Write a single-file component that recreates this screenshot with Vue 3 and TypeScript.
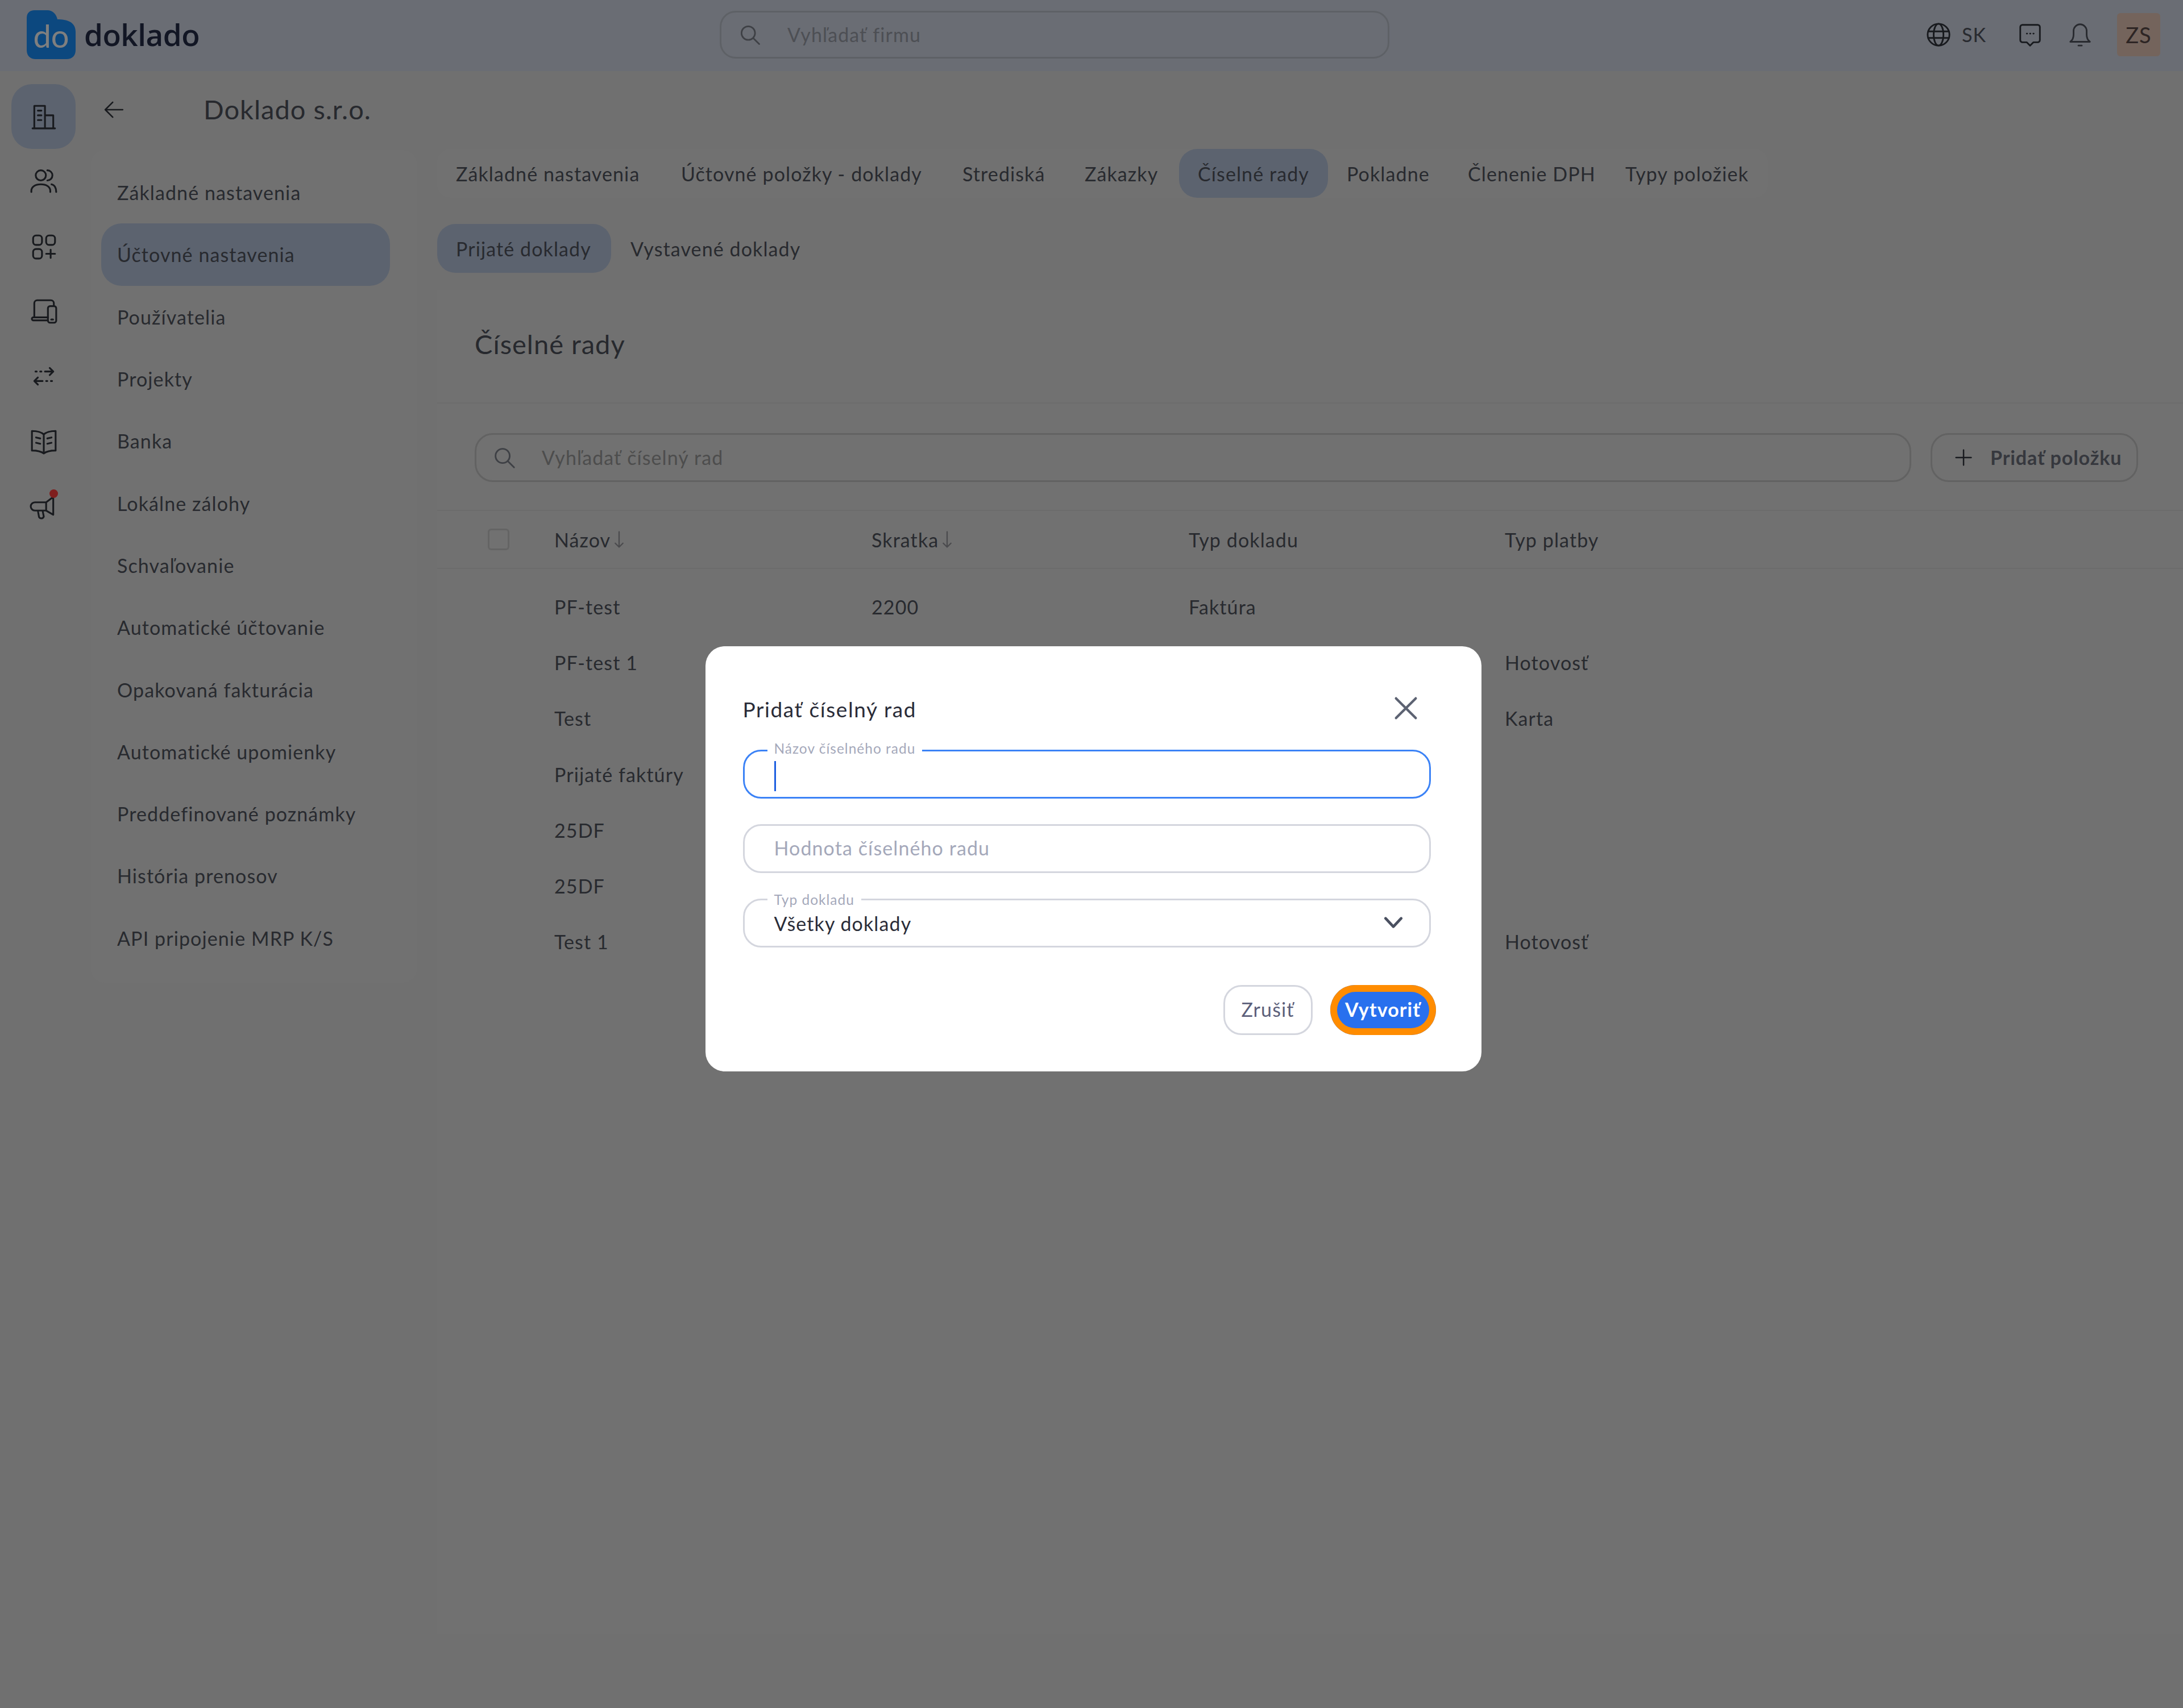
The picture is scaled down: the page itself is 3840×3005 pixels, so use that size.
<script setup lang="ts">
const railIcons = ['building', 'users', 'apps', 'devices', 'swap', 'book', 'megaphone']
const menu = ['Základné nastavenia', 'Účtovné nastavenia', 'Používatelia', 'Projekty', 'Banka', 'Lokálne zálohy', 'Schvaľovanie', 'Automatické účtovanie', 'Opakovaná fakturácia', 'Automatické upomienky', 'Preddefinované poznámky', 'História prenosov', 'API pripojenie MRP K/S']
const tabs = ['Základné nastavenia', 'Účtovné položky - doklady', 'Strediská', 'Zákazky', 'Číselné rady', 'Pokladne', 'Členenie DPH', 'Typy položiek']
const rows = [
  ['PF-test', '2200', 'Faktúra', ''],
  ['PF-test 1', '', '', 'Hotovosť'],
  ['Test', '', '', 'Karta'],
  ['Prijaté faktúry', '', '', ''],
  ['25DF', '', '', ''],
  ['25DF', '', '', ''],
  ['Test 1', '', '', 'Hotovosť'],
]
</script>

<template>
  <div class="page">
    <header class="topbar">
      <div class="logo">
        <div class="logo-mark">
          <svg viewBox="0 0 86 86" width="86" height="86"><path d="M14 0H36C46 0 52 7 54 16C70 16 86 20 86 38V70C86 80 80 86 70 86H16C6 86 0 80 0 70V14C0 5 5 0 14 0Z" fill="#1890ff"/></svg>
          <span class="logo-do">do</span>
        </div>
        <span class="logo-word">doklado</span>
      </div>
      <div class="top-search">
        <svg class="ic" viewBox="0 0 24 24" width="44" height="44"><circle cx="10.5" cy="10.5" r="6.5"/><path d="M15.5 15.5L21 21"/></svg>
        <span>Vyhľadať firmu</span>
      </div>
      <div class="top-right">
        <svg class="ic dark" viewBox="0 0 24 24" width="46" height="46"><circle cx="12" cy="12" r="10"/><ellipse cx="12" cy="12" rx="4.5" ry="10"/><path d="M2.5 9H21.5M2.5 15H21.5"/></svg>
        <span class="lang">SK</span>
        <svg class="ic dark chat" viewBox="0 0 24 24" width="46" height="46"><path d="M5 3H19A2 2 0 0 1 21 5V17A2 2 0 0 1 19 19H15L12 22L9 19H5A2 2 0 0 1 3 17V5A2 2 0 0 1 5 3Z"/><path d="M9 11H9.3M12 11H12.3M15 11H15.3"/></svg>
        <svg class="ic bell" viewBox="0 0 24 24" width="46" height="46"><path d="M3 18.5C5 17 6 15 6 12V8.5A6 6 0 0 1 18 8.5V12C18 15 19 17 21 18.5Z"/><path d="M10.5 22H13.5"/></svg>
        <div class="avatar">ZS</div>
      </div>
    </header>

    <div class="body">
      <nav class="rail">
        <div v-for="(n, i) in railIcons" :key="n" class="rail-slot" :class="{ on: i === 0 }">
          <svg class="ic dark" viewBox="0 0 24 24" width="50" height="50">
            <template v-if="n === 'building'"><path d="M4 22V3H13V22M13 11H20V22M2.5 22H21.5M7 7H10M7 11H10M7 15H10" /></template>
            <template v-else-if="n === 'users'"><circle cx="9.5" cy="7" r="4.3"/><path d="M15 2.7A4.3 4.3 0 0 1 15 11.300M1.500 21V20C1.500 16.500 5 14.500 9.500 14.500S17.500 16.500 17.500 20V21M18.500 14.500C21 15 22.500 17.500 22.500 21"/></template>
            <template v-else-if="n === 'apps'"><rect x="3" y="2.500" width="7.500" height="8" rx="2.500"/><rect x="14" y="2.500" width="7.500" height="8" rx="2.500"/><rect x="3" y="14" width="7.500" height="8" rx="2.500"/><path d="M14 18H21.500M17.800 14.500V21.500"/></template>
            <template v-else-if="n === 'devices'"><path d="M4 17V5A2.500 2.500 0 0 1 6.500 2.500H18A2.500 2.500 0 0 1 20.500 5V7M15.500 19.500H3.200A1.200 1.200 0 0 1 3.200 17H15.500"/><rect x="15.500" y="7.500" width="7" height="14" rx="1.800"/><path d="M18.300 18.800H19.800"/></template>
            <template v-else-if="n === 'swap'"><path d="M13 8H20M17 5L20 8L17 11M11 16H4M7 13L4 16L7 19M5 8H6M9 8H10M14 16H15M18 16H19"/></template>
            <template v-else-if="n === 'book'"><path d="M12 6C9.500 3.500 6 3 2 3V19.500C6 19.500 9.500 20 12 22C14.500 20 18 19.500 22 19.500V3C18 3 14.500 3.500 12 6ZM12 6V22M5.500 8.500L9 9.300M5.500 13L9 13.800M15 9.300L18.500 8.500M15 13.800L18.500 13"/></template>
            <template v-else><path d="M4.500 8.500H14L20 4V19L14 15.500H4.500A3.500 3.500 0 0 1 4.500 8.500ZM14 8.500V15.500M7 15.500L8 21A2.200 2.200 0 0 0 12 20.500L11 15.500"/></template>
          </svg>
          <i v-if="n === 'megaphone'" class="dot"></i>
        </div>
      </nav>

      <aside class="side">
        <div class="side-head">
          <svg class="ic dark back" viewBox="0 0 24 24" width="42" height="42"><path d="M21 12H3.500M11 4.500L3.500 12L11 19.500"/></svg>
          <h1>Doklado s.r.o.</h1>
        </div>
        <ul class="menu">
          <li v-for="(m, i) in menu" :key="m" :class="{ on: i === 1 }">{{ m }}</li>
        </ul>
      </aside>

      <main class="main">
        <div class="tabs top">
          <div v-for="(t, i) in tabs" :key="t" class="tab" :class="{ on: i === 4 }">{{ t }}</div>
        </div>
        <div class="tabs sub">
          <div class="tab on">Prijaté doklady</div>
          <div class="tab">Vystavené doklady</div>
        </div>
        <section class="panel">
          <h2>Číselné rady</h2>
          <div class="tools">
            <div class="search">
              <svg class="ic" viewBox="0 0 24 24" width="46" height="46"><circle cx="10.500" cy="10.500" r="6.500"/><path d="M15.500 15.500L21 21"/></svg>
              <span>Vyhľadať číselný rad</span>
            </div>
            <div class="add">
              <svg class="ic dark" viewBox="0 0 24 24" width="40" height="40"><path d="M12 4V20M4 12H20"/></svg>
              <span>Pridať položku</span>
            </div>
          </div>
          <div class="thead">
            <div class="check"></div>
            <div class="cell">Názov<svg class="ic arr" viewBox="0 0 12 24" width="18" height="36"><path d="M6 3V21M1.500 16.500L6 21L10.500 16.500"/></svg></div>
            <div class="cell">Skratka<svg class="ic arr" viewBox="0 0 12 24" width="18" height="36"><path d="M6 3V21M1.500 16.500L6 21L10.500 16.500"/></svg></div>
            <div class="cell">Typ dokladu</div>
            <div class="cell">Typ platby</div>
          </div>
          <div class="tbody">
            <div v-for="(r, i) in rows" :key="i" class="row">
              <div class="cell" v-for="(c, j) in r" :key="j">{{ c }}</div>
            </div>
          </div>
        </section>
      </main>
    </div>

    <div class="overlay">
      <div class="modal">
        <div class="modal-head">
          <h3>Pridať číselný rad</h3>
          <svg class="close" viewBox="0 0 24 24" width="52" height="52"><path d="M4 4L20 20M20 4L4 20"/></svg>
        </div>
        <div class="field focus">
          <label>Názov číselného radu</label>
          <i class="caret"></i>
        </div>
        <div class="field">
          <span class="ph">Hodnota číselného radu</span>
        </div>
        <div class="field">
          <label>Typ dokladu</label>
          <span class="val">Všetky doklady</span>
          <svg class="chev" viewBox="0 0 24 24" width="44" height="44"><path d="M4.500 8L12 16L19.500 8"/></svg>
        </div>
        <div class="actions">
          <button class="btn ghost">Zrušiť</button>
          <button class="btn primary">Vytvoriť</button>
        </div>
      </div>
    </div>
  </div>
</template>

<style scoped>
.page {
  position: relative;
  width: 3840px;
  height: 3005px;
  overflow: hidden;
  background: #e0e0e0;
  color: #50545e;
  font-family: "Lato", "Liberation Sans", sans-serif;
  font-size: 34px;
  letter-spacing: 1.1px;
}
h1, h2, h3, ul { margin: 0; padding: 0; font-weight: 400; }
.ic { fill: none; stroke: #7c808a; stroke-width: 1.5; stroke-linecap: round; stroke-linejoin: round; flex: none; }
.ic.dark { stroke: #30343c; }

.topbar {
  height: 125px;
  background: #d4dae8;
  display: flex;
  align-items: center;
  position: relative;
  padding: 0 40px 4px 47px;
  box-sizing: border-box;
}
.logo { display: flex; align-items: center; width: 1219px; }
.logo-mark { position: relative; width: 86px; height: 86px; display: flex; align-items: center; justify-content: center; }
.logo-mark svg { position: absolute; inset: 0; }
.logo-do { position: relative; color: #ffffff; font-size: 56px; font-weight: 400; letter-spacing: 0; padding-top: 4px; }
.logo-word { margin-left: 15px; color: #242c48; font-size: 53px; font-weight: 600; letter-spacing: -0.5px; font-family: "Open Sans", sans-serif; }
.top-search {
  width: 1178px;
  height: 84px;
  box-sizing: border-box;
  border: 3px solid #bcc2cc;
  border-radius: 28px;
  display: flex;
  align-items: center;
  gap: 44px;
  padding-left: 28px;
  color: #9a9ea8;
}
.top-right { margin-left: auto; display: flex; align-items: center; }
.lang { margin-left: 18px; width: 60px; }
.chat { margin-left: 37px; }
.bell { margin-left: 42px; stroke: #50545e; }
.avatar {
  margin-left: 42px;
  width: 76px;
  height: 76px;
  background: #e8c8b8;
  color: #5a4a48;
  font-size: 38px;
  display: flex;
  align-items: center;
  justify-content: center;
  border-radius: 6px;
}

.body { display: flex; height: 2880px; }
.rail { width: 160px; padding: 23px 0 0 20px; box-sizing: border-box; flex: none; }
.rail-slot { position: relative; width: 113px; height: 114.300px; display: flex; align-items: center; justify-content: center; border-radius: 36px; }
.rail-slot.on { background: #b8c6de; }
.dot { position: absolute; width: 15px; height: 15px; border-radius: 50%; background: #ff3c3c; top: 27px; right: 31px; }

.side { width: 609px; flex: none; }
.side-head { height: 139px; display: flex; align-items: center; padding-left: 19px; padding-bottom: 3px; box-sizing: border-box; }
.side-head h1 { font-size: 47px; margin-left: 137px; color: #4e525c; padding-bottom: 3px; letter-spacing: 1px; }
.menu { list-style: none; background: #e2e2e2; width: 573px; box-sizing: border-box; padding: 20px 0 24px 18px; border-radius: 24px; }
.menu li { width: 508px; box-sizing: border-box; height: 109.300px; display: flex; align-items: center; padding-left: 28px; border-radius: 36px; }
.menu li.on { background: #b8c6de; }

.main { flex: 1; padding-top: 137px; min-width: 0; }
.tabs { display: grid; background: #e2e2e2; border-radius: 24px; }
.tabs.top { width: 2341px; grid-template-columns: 396px 495px 215px 199px 262px 213px 277px 284px; }
.tab { height: 86px; display: flex; align-items: center; padding: 0 0 0 33px; border-radius: 32px; white-space: nowrap; }
.tab.on { background: #b8c6de; }
.sub { background: none; margin-top: 46px; grid-template-columns: 306px auto; justify-content: start; }
.sub .tab { padding-left: 33px; padding-right: 0; }
.sub .tab:last-child { padding-left: 34px; }
.panel { margin-top: 30px; background: #e2e2e2; height: 2365px; }
.panel h2 { font-size: 47px; letter-spacing: 1px; height: 200px; box-sizing: border-box; padding: 0 0 8px 66px; display: flex; align-items: center; color: #4e525c; border-bottom: 2px solid #d8d8d8; }
.tools { height: 189px; box-sizing: border-box; padding: 2px 79px 0 66px; display: flex; align-items: center; gap: 34px; border-bottom: 2px solid #d8d8d8; }
.search { flex: 1; height: 86px; box-sizing: border-box; border: 3px solid #c4c4c4; border-radius: 32px; display: flex; align-items: center; gap: 43px; padding-left: 26px; color: #9a9a9a; }
.add { width: 365px; height: 86px; box-sizing: border-box; border: 3px solid #c4c4c4; border-radius: 32px; display: flex; align-items: center; gap: 27px; padding-left: 35px; color: #6c707c; font-weight: 700; letter-spacing: 0.9px; }
.thead { height: 102px; display: grid; grid-template-columns: 206px 558px 558px 556px 1fr; align-items: center; border-bottom: 2px solid #d8d8d8; box-sizing: border-box; }
.check { width: 38px; height: 38px; box-sizing: border-box; border: 3px solid #c8c8c8; border-radius: 6px; margin-left: 89px; }
.cell { display: flex; align-items: center; gap: 6px; }
.ic.arr { stroke: #94949a; }
.tbody { padding: 17px 0 0 206px; }
.row { height: 98.300px; display: grid; grid-template-columns: 558px 558px 556px 1fr; align-items: center; }

.overlay {
  position: absolute;
  inset: 0;
  background: rgba(0, 0, 0, 0.5);
  display: flex;
  align-items: flex-start;
  justify-content: center;
  padding: 1137px 0 0 6px;
  box-sizing: border-box;
}
.modal {
  width: 1365px;
  height: 748px;
  box-sizing: border-box;
  background: #ffffff;
  border-radius: 34px;
  padding: 0 89px 0 66px;
  color: #2a2c38;
}
.modal-head { height: 182px; display: flex; align-items: center; justify-content: space-between; padding-top: 38px; box-sizing: border-box; }
.modal-head h3 { font-size: 37px; letter-spacing: 1.6px; }
.close { fill: none; stroke: #5c6272; stroke-width: 2; stroke-linecap: round; margin-right: 18px; margin-top: -2px; }
.field { position: relative; height: 86px; box-sizing: border-box; border: 3px solid #d4d6de; border-radius: 32px; margin-bottom: 45px; display: flex; align-items: center; padding-left: 52px; }
.field.focus { border-color: #3b82f6; }
.field label { position: absolute; left: 40px; top: -15px; padding: 0 12px; background: #ffffff; color: #a4a8ba; font-size: 24.500px; line-height: 28px; letter-spacing: 1px; }
.field.focus label { top: -19px; }
.caret { width: 3px; height: 53px; background: #1d5fe0; margin-top: 6px; }
.ph { color: #a4a8ba; padding-bottom: 3px; }
.val { padding-top: 1px; }
.chev { position: absolute; right: 41px; top: 17px; fill: none; stroke: #4a5060; stroke-width: 2.6; stroke-linecap: round; stroke-linejoin: round; }
.actions { display: flex; justify-content: flex-end; gap: 31px; margin-top: 66px; margin-right: -9px; }
.btn { font-family: inherit; font-size: 34px; letter-spacing: 1.1px; box-sizing: border-box; height: 88px; cursor: pointer; padding: 0 0 3px; }
.ghost { width: 157px; background: #ffffff; border: 3px solid #d4d6de; border-radius: 32px; color: #5c5f7a; }
.primary { width: 186px; background: #2870ee; border: 0; outline: 0; box-shadow: inset 0 0 0 12px #ff8c00; border-radius: 44px; color: #ffffff; font-weight: 700; }
</style>
